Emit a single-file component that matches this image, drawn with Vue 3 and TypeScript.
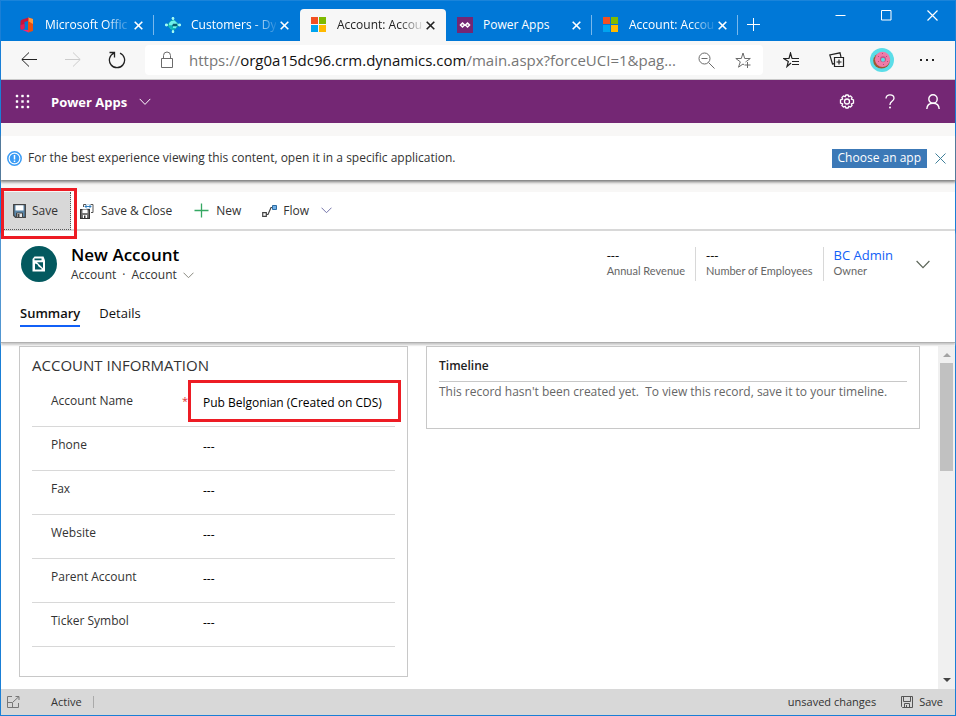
<script setup lang="ts">
import { ref } from 'vue'

interface BrowserTab {
  id: number
  title: string
  icon: 'office' | 'customers' | 'microsoft' | 'powerapps'
  divider: boolean
  faded: boolean
}

interface Field {
  id: string
  label: string
  value: string
  required?: boolean
}

const tabs: BrowserTab[] = [
  { id: 1, title: 'Microsoft Offic', icon: 'office', divider: true, faded: true },
  { id: 2, title: 'Customers - Dy', icon: 'customers', divider: false, faded: true },
  { id: 3, title: 'Account: Accou', icon: 'microsoft', divider: false, faded: true },
  { id: 4, title: 'Power Apps', icon: 'powerapps', divider: true, faded: false },
  { id: 5, title: 'Account: Accou', icon: 'microsoft', divider: true, faded: true },
]
const activeTab = ref(3)

const fields = ref<Field[]>([
  { id: 'account-name', label: 'Account Name', value: 'Pub Belgonian (Created on CDS)', required: true },
  { id: 'phone', label: 'Phone', value: '---' },
  { id: 'fax', label: 'Fax', value: '---' },
  { id: 'website', label: 'Website', value: '---' },
  { id: 'parent-account', label: 'Parent Account', value: '---' },
  { id: 'ticker-symbol', label: 'Ticker Symbol', value: '---' },
])
</script>

<template>
  <div class="window">
    <header class="titlebar">
      <div class="tabs" role="tablist">
        <div v-for="tab in tabs" :key="tab.id" class="tab" :class="{ active: tab.id === activeTab, divider: tab.divider }">
          <button class="tab-main" type="button" role="tab" :aria-selected="tab.id === activeTab" @click="activeTab = tab.id">
            <svg v-if="tab.icon === 'office'" class="favicon" viewBox="0 0 16 16" aria-hidden="true">
              <path d="M9 .5 14 2v12l-5 1.500z" fill="#e8500f" />
              <path d="M9 .5 14 2v5L9 4z" fill="#ff9a3c" />
              <path d="M9.500 .5 3.500 2.500C2 3 1.500 4 1.500 5v6c0 1.300.6 2 1.800 1.500L5.500 11.500V5l4-1.300z" fill="#c8143c" />
              <path d="M3 12.700 9.500 13v2.500z" fill="#f0287d" />
              <path d="M1.500 8v3c0 1.300.6 2 1.800 1.500l2.200-1V7z" fill="#e51b58" />
            </svg>
            <svg v-else-if="tab.icon === 'customers'" class="favicon" viewBox="0 0 16 16" aria-hidden="true">
              <path d="M8 1.500 14.500 8 8 14.500 1.500 8z" fill="#08a4a8" />
              <path d="M8 1.500 14.500 8H8z" fill="#39c6c4" />
              <circle cx="8" cy="8" r="4.200" fill="#6ff0ea" />
              <path d="M3.800 8.200A4.200 4.200 0 0 0 11 11H8V8.200z" fill="#0fb5bb" />
              <path d="M7 9.200 8 6.800h4v2.400z" fill="#0a5c70" />
              <path d="M0 8h3M13 8h3M8 0v3M8 13v3" stroke="#8ff2ec" stroke-width="1.600" />
              <circle cx="8" cy="1.300" r="1.300" fill="#a5fbf3" /><circle cx="8" cy="14.700" r="1.300" fill="#a5fbf3" />
              <circle cx="1.400" cy="8" r="1.400" fill="#a5fbf3" /><circle cx="14.600" cy="8" r="1.400" fill="#a5fbf3" />
            </svg>
            <svg v-else-if="tab.icon === 'microsoft'" class="favicon" viewBox="0 0 16 16" aria-hidden="true">
              <path d="M0 0h7v7H0z" fill="#f25022" /><path d="M8 0h7v7H8z" fill="#7fba00" />
              <path d="M0 8h7v7H0z" fill="#00a4ef" /><path d="M8 8h7v7H8z" fill="#ffb900" />
            </svg>
            <svg v-else class="favicon" viewBox="0 0 16 16" aria-hidden="true">
              <path d="M0 0h16v16H0z" fill="#742774" />
              <path d="M5.500 6 7.500 8 5.500 10 3.500 8zM10.500 6 12.500 8 10.500 10 8.500 8z" fill="none" stroke="#fff" stroke-width="1.500" />
            </svg>
            <span class="tab-title" :class="{ faded: tab.faded }">{{ tab.title }}</span>
          </button>
          <button class="tab-close" type="button" aria-label="Close tab">
            <svg width="9" height="9" viewBox="0 0 9 9"><path d="M.7.7l7.600 7.600M8.300.7.7 8.300" stroke="currentColor" stroke-width="1.600" /></svg>
          </button>
        </div>
        <button class="new-tab" type="button" aria-label="New tab">
          <svg width="14" height="14" viewBox="0 0 14 14"><path d="M6.500 0v13M0 6.500h13" stroke="currentColor" /></svg>
        </button>
      </div>
      <div class="window-controls">
        <button type="button" aria-label="Minimize"><svg width="11" height="11" viewBox="0 0 11 11"><path d="M.5 5.500H10.500" stroke="currentColor" /></svg></button>
        <button type="button" aria-label="Maximize"><svg width="11" height="11" viewBox="0 0 11 11"><path d="M.5.5h9.500v9.500H.5z" fill="none" stroke="currentColor" /></svg></button>
        <button type="button" aria-label="Close"><svg width="11" height="11" viewBox="0 0 11 11"><path d="M.5.5l10 10M10.500.5l-10 10" stroke="currentColor" stroke-width="1.200" /></svg></button>
      </div>
    </header>

    <nav class="toolbar" aria-label="Browser">
      <div class="nav-buttons">
        <button type="button" aria-label="Back"><svg width="16" height="16" viewBox="0 0 16 16"><path d="M16 7.500H1M8 .5.8 7.500 8 14.500" class="line" /></svg></button>
        <button type="button" aria-label="Forward" disabled><svg width="16" height="16" viewBox="0 0 16 16"><path d="M0 7.500h15M8 .5l7.200 7L8 14.500" class="line" /></svg></button>
        <button type="button" aria-label="Refresh"><svg width="18" height="18" viewBox="0 0 18 18"><path d="M6 2.100A7.600 7.600 0 1 0 12 2.100M1.500 1.500H6.500V6.500" class="line" stroke-width="1.300" /></svg></button>
      </div>
      <div class="address">
        <svg width="14" height="18" viewBox="0 0 14 18" aria-hidden="true"><path d="M1.500 7.500h11v9h-11zM3.500 7.500V4.500a3.500 3.500 0 0 1 7 0v3" fill="none" stroke="#6b6b6b" /></svg>
        <div class="url" role="textbox" aria-label="Address">https://<b>org0a15dc96.crm.dynamics.com</b>/main.aspx?forceUCI=1&amp;pag...</div>
        <button type="button" aria-label="Zoom out"><svg width="17" height="17" viewBox="0 0 17 17"><circle cx="6.500" cy="6.500" r="5.500" class="line" /><path d="M3.500 6.500h6M10.500 10.500l6 6" class="line" /></svg></button>
        <button type="button" aria-label="Add to favorites"><svg width="17" height="17" viewBox="0 0 17 17"><path d="M10.500 10 11.500 9.300 15.300 6.500H9.700L8 1 6.300 6.500H.8L5.300 9.800 3.500 15.200 8 12 9 12.700M12.500 10v6M9.500 13h6" class="line" /></svg></button>
      </div>
      <div class="browser-actions">
        <button type="button" aria-label="Favorites"><svg width="17" height="16" viewBox="0 0 17 16"><path d="M8 11 4 14.500 5.300 9.500.8 6.500H6L7.500 1 9 6.500M9 6.500h7M9 9.500h7M9 12.500h7" class="line" stroke-width="1.200" /></svg></button>
        <button type="button" aria-label="Collections"><svg width="16" height="16" viewBox="0 0 16 16"><path d="M5.500 5.500h9v9h-9zM10 7.500v5M7.500 10h5M12 5 11 .8.8 3 3.500 12l1.500-.4" class="line" stroke-width="1.200" /></svg></button>
        <button type="button" aria-label="Profile">
          <svg width="24" height="24" viewBox="0 0 24 24">
            <circle cx="12" cy="12" r="12" fill="#5bdde8" /><ellipse cx="11.500" cy="12.800" rx="8.300" ry="7.800" fill="#9b5a31" />
            <circle cx="12.500" cy="11.300" r="7.600" fill="#f07ba8" /><circle cx="13" cy="11.300" r="3" fill="#c75283" /><circle cx="13" cy="11.700" r="2" fill="#5bdde8" />
            <path d="M8 8l1 1M12 5.500h1M17 8l-1 1M8 14l1-1M13 16.500h1M17 14l1-1" stroke="#bd4779" />
          </svg>
        </button>
        <button type="button" aria-label="More"><svg width="16" height="4" viewBox="0 0 16 4"><path d="M1 1h2v2H1zM7 1h2v2H7zM13 1h2v2h-2z" fill="#222" /></svg></button>
      </div>
    </nav>

    <header class="appbar">
      <button type="button" class="waffle" aria-label="App launcher">
        <svg width="15" height="15" viewBox="0 0 15 15"><path d="M1 1h2v2H1zM6.500 1h2v2h-2zM12 1h2v2h-2zM1 6.500h2v2H1zM6.500 6.500h2v2h-2zM12 6.500h2v2h-2zM1 12h2v2H1zM6.500 12h2v2h-2zM12 12h2v2h-2z" fill="currentColor" stroke="currentColor" stroke-width=".4" /></svg>
      </button>
      <button type="button" class="app-name">Power Apps
        <svg width="12" height="8" viewBox="0 0 12 8"><path d="M.7.9 6 6.400 11.300.9" class="line" /></svg>
      </button>
      <div class="app-actions">
        <button type="button" aria-label="Settings"><svg width="16" height="16" viewBox="0 0 16 16"><path d="M6.200 2.600 7 1h2l.8 1.600 1.700-.6 1.500 1.500-.6 1.700L14.500 6v3l-2.100.8.6 1.700-1.500 1.500-1.700-.6L9 14H7l-.8-1.600-1.700.6L3 11.500l.6-1.700L1.500 9V6l2.100-.8L3 3.500 4.500 2z" class="line" stroke-width="1.300" /><circle cx="8" cy="7.500" r="2.500" class="line" stroke-width="1.300" /></svg></button>
        <button type="button" aria-label="Help"><svg width="10" height="15" viewBox="0 0 10 15"><path d="M1 4.500C1 2.200 2.700.8 5 .8s4 1.300 4 3.400c0 3-4 3.200-4 6.300v.5" class="line" stroke-width="1.300" /><circle cx="5" cy="13.500" r="1" fill="currentColor" /></svg></button>
        <button type="button" aria-label="Account"><svg width="14" height="16" viewBox="0 0 14 16"><circle cx="7" cy="5" r="4.200" class="line" stroke-width="1.400" /><path d="M.8 15C1 11.500 3.500 9.200 7 9.200s6 2.300 6.200 5.800" class="line" stroke-width="1.400" /></svg></button>
      </div>
    </header>

    <section class="notice">
      <svg width="15" height="15" viewBox="0 0 15 15" aria-hidden="true"><circle cx="7.500" cy="7.500" r="6.700" fill="#fff" stroke="#3b9cf5" stroke-width="1.500" /><circle cx="7.500" cy="7.500" r="4.800" fill="#3b9cf5" /><path d="M7.500 4v4.500M7.500 9.500V11" stroke="#fff" stroke-width="1.500" /></svg>
      <p>For the best experience viewing this content, open it in a specific application.</p>
      <button type="button" class="choose">Choose an app</button>
      <button type="button" class="dismiss" aria-label="Dismiss"><svg width="11" height="11" viewBox="0 0 11 11"><path d="M.5.5l10 10M10.500.5l-10 10" stroke="#40809a" /></svg></button>
    </section>

    <section class="commands" aria-label="Commands">
      <div class="save-wrap">
        <button type="button" class="command save">
          <svg width="13" height="14" viewBox="0 0 13 14"><path d="M.7.7h11.600v12.600H2.500L.7 11.500z" fill="#5a88ab" stroke="#444" stroke-width="1.300" /><path d="M2.500 1.300h8v5.200h-8z" fill="#fff" /><path d="M3.500 9h6v4.500h-6z" fill="#e8e8e8" stroke="#444" /><path d="M4.500 10h2v3h-2z" fill="#444" /></svg>
          Save
        </button>
        <span class="highlight"></span>
      </div>
      <button type="button" class="command save-close">
        <svg width="14" height="16" viewBox="0 0 14 16"><path d="M.6 6.600h8.800v8.800H.6z" fill="#777" stroke="#333" stroke-width="1.200" /><path d="M2.500 6.500h5V10h-5zM3 12h4v3H3z" fill="#fff" /><path d="M4 12.500h1.500V15H4z" fill="#333" /><path d="M3.500 4V1.500H6M10.500 1.500H13v8h-2" fill="none" stroke="#555" /><path d="M5 3.500h6M9 1.500l2 2-2 2M7 1.500 5 3.500l2 2" fill="none" stroke="#2f7cbc" /></svg>
        Save &amp; Close
      </button>
      <button type="button" class="command new">
        <svg width="15" height="15" viewBox="0 0 15 15"><path d="M7.500.5v14M.5 7.500h14" stroke="#35a863" stroke-width="1.300" /></svg>
        New
      </button>
      <button type="button" class="command flow">
        <svg width="15" height="12" viewBox="0 0 15 12"><path d="M.7 7.700h3.600v3.600H.7zM4.500 9.500H6L9 2.500h1.500" fill="none" stroke="#444" stroke-width="1.200" /><path d="M10.500.5h4v4h-4z" fill="#71afe5" stroke="#2b6ca3" /></svg>
        Flow
        <svg class="flow-chevron" width="11" height="7" viewBox="0 0 11 7"><path d="M.5.7l5 5 5-5" fill="none" stroke="#7474aa" /></svg>
      </button>
    </section>

    <section class="record">
      <div class="record-top">
        <svg class="entity" width="36" height="36" viewBox="0 0 36 36" aria-hidden="true"><circle cx="18" cy="18" r="18" fill="#03595f" /><path d="M13.500 10.500h9l1.500 4v11H11.500V13z" fill="#fff" /><path d="M13.500 12.500h7v1.800h-7zM14 17.500l2.500 1 1 2 3 2v1H14z" fill="#03595f" /><path d="M16 16.300h6v6z" fill="#03595f" /></svg>
        <div class="identity">
          <h1>New Account</h1>
          <button type="button">Account<span>·</span>Account<svg width="11" height="7" viewBox="0 0 11 7"><path d="M.5.7l5 5 5-5" fill="none" stroke="#8a8a80" /></svg></button>
        </div>
        <dl class="stats">
          <div><dd>---</dd><dt>Annual Revenue</dt></div>
          <div><dd>---</dd><dt>Number of Employees</dt></div>
          <div><dd><a href="#owner">BC Admin</a></dd><dt>Owner</dt></div>
        </dl>
        <button type="button" class="expand" aria-label="Expand header"><svg width="14" height="9" viewBox="0 0 14 9"><path d="M.6 1 7 7.600 13.400 1" fill="none" stroke="#5d6659" stroke-width="1.200" /></svg></button>
      </div>
      <div class="form-tabs" role="tablist">
        <button type="button" role="tab" aria-selected="true" class="selected">Summary</button>
        <button type="button" role="tab" aria-selected="false">Details</button>
      </div>
    </section>

    <main class="body">
      <div class="columns">
        <section class="card">
          <h2>ACCOUNT INFORMATION</h2>
          <div v-for="field in fields" :key="field.id" class="field">
            <label :for="field.id">{{ field.label }}</label>
            <span class="star">{{ field.required ? '*' : '' }}</span>
            <div class="control">
              <input :id="field.id" v-model="field.value" type="text" />
              <span v-if="field.required" class="highlight"></span>
            </div>
          </div>
        </section>
        <section class="card timeline">
          <h3>Timeline</h3>
          <p>This record hasn't been created yet.&nbsp; To view this record, save it to your timeline.</p>
        </section>
      </div>
      <div class="scrollbar" aria-hidden="true">
        <svg width="8" height="4" viewBox="0 0 8 4"><path d="M0 4 4 0l4 4z" fill="#a3a3a3" /></svg>
        <div class="track"><div class="thumb"></div></div>
        <svg width="8" height="4" viewBox="0 0 8 4"><path d="M0 0l4 4 4-4z" fill="#444" /></svg>
      </div>
    </main>

    <footer class="status">
      <button type="button" class="popout" aria-label="Open in new window"><svg width="13" height="12" viewBox="0 0 13 12"><path d="M5 .5H.5v11h11V7M.5 6.500h5v5M6 6l6-5.500M8.500.5H12V4" fill="none" stroke="#777" /></svg></button>
      <span class="state">Active</span>
      <span class="unsaved">unsaved changes</span>
      <button type="button" class="footer-save"><svg width="12" height="12" viewBox="0 0 12 12"><path d="M.5.5h11v11h-10L.5 10.500zM2.500.5v5h7v-5M3.500 11.500v-4h5v4M5.500 9v2.500" fill="none" stroke="#555" /></svg>Save</button>
    </footer>
  </div>
</template>

<style>
body {
  margin: 0;
}
</style>

<style scoped>
.window {
  --red: #ed1c24;
  box-sizing: border-box;
  display: flex;
  flex-direction: column;
  min-height: 100vh;
  border: 1px solid #1a7fd6;
  border-top: 0;
  background: #fff;
  color: #333;
  font: 12px/16px "Open Sans", "Noto Sans", sans-serif;
}
.window * {
  box-sizing: border-box;
}
button {
  display: inline-flex;
  align-items: center;
  justify-content: center;
  padding: 0;
  border: 0;
  background: none;
  color: inherit;
  font: inherit;
  white-space: nowrap;
}
svg {
  flex: none;
}
.line {
  fill: none;
  stroke: currentColor;
}
h1, h2, h3, p, dl, dd, dt {
  margin: 0;
  font-weight: 400;
}

.titlebar {
  display: flex;
  justify-content: space-between;
  height: 41px;
  border-top: 1px solid #1a84da;
  background: #0078d7;
  color: #fff;
}
.tabs {
  display: flex;
  padding: 8px 0 0 7px;
}
.tab {
  position: relative;
  display: flex;
  align-items: center;
  width: 146px;
  padding: 0 11px;
  border-radius: 4px 4px 0 0;
}
.tab.divider::after {
  content: "";
  position: absolute;
  right: 0;
  top: 6px;
  width: 1px;
  height: 20px;
  background: #79b8ec;
}
.tab.active {
  background: #f7f7f7;
  color: #222;
}
.tab-main {
  flex: 1;
  min-width: 0;
  justify-content: flex-start;
  gap: 10px;
}
.favicon {
  width: 16px;
  height: 16px;
}
.tab-title {
  flex: 1;
  text-align: left;
}
.tab-title.faded {
  mask-image: linear-gradient(to right, #000 72%, transparent 104%);
}
.tab-close {
  width: 14px;
  height: 18px;
  justify-content: flex-end;
}
.new-tab {
  width: 32px;
}
.window-controls {
  display: flex;
  height: 29px;
}
.window-controls button {
  width: 46px;
}

.toolbar {
  display: flex;
  align-items: center;
  height: 39px;
  border-bottom: 1px solid #c9c9c9;
  background: #f7f7f7;
  color: #222;
}
.nav-buttons {
  display: flex;
  gap: 4px;
  width: 144px;
  padding-left: 8px;
}
.nav-buttons button {
  width: 40px;
  height: 30px;
}
.nav-buttons button:disabled {
  color: #ccc;
}
.address {
  display: flex;
  flex: 1;
  align-items: center;
  min-width: 0;
  height: 30px;
  padding: 0 11px 0 15px;
  border-radius: 4px;
  background: #fff;
  color: #6b6b6b;
}
.url {
  flex: 1;
  min-width: 0;
  margin-left: 15px;
  overflow: hidden;
  color: #767676;
  font-size: 15px;
  line-height: 24px;
  white-space: nowrap;
}
.url b {
  color: #111;
  font-weight: 400;
}
.address button {
  width: 17px;
  margin-left: 20px;
}
.address .url + button {
  margin-left: 4px;
}
.browser-actions {
  display: flex;
  padding: 0 6px;
}
.browser-actions button {
  width: 45px;
  height: 30px;
}

.appbar {
  display: flex;
  align-items: center;
  height: 43px;
  background: #742774;
  color: #fff;
}
.waffle {
  width: 42px;
  height: 100%;
}
.app-name {
  gap: 12px;
  margin-left: 8px;
  font-size: 13px;
  font-weight: 700;
}
.app-actions {
  display: flex;
  margin-left: auto;
  padding-right: 1px;
}
.app-actions button {
  width: 43px;
  height: 43px;
}

.notice {
  position: relative;
  display: flex;
  align-items: center;
  height: 44px;
  margin-top: 13px;
  padding: 0 8px 0 6px;
  background: #fff;
  box-shadow: 0 -13px 0 #f8f7f6, 0 1px 3px 1px #777;
}
.notice p {
  flex: 1;
  margin-left: 6px;
}
.choose {
  height: 19px;
  padding: 0 6px;
  background: #3c79b7;
  color: #fff;
}
.dismiss {
  width: 13px;
  height: 20px;
  margin-left: 7px;
}

.commands {
  display: flex;
  height: 51px;
  padding: 0 3px;
  border-top: 12px solid #f8f7f6;
  border-bottom: 2px solid #d8d8d8;
}
.save-wrap {
  position: relative;
}
.command {
  height: 37px;
}
.save {
  justify-content: flex-start;
  gap: 6px;
  width: 67px;
  height: 38px;
  padding-left: 9px;
  border: 1px dotted #555;
  border-width: 0 1px 1px 0;
  background: #d8d8d8;
}
.highlight {
  position: absolute;
  border: 3px solid var(--red);
  pointer-events: none;
}
.save-wrap .highlight {
  z-index: 2;
  inset: -4px -6px -10px -3px;
}
.save-close {
  gap: 7px;
  margin-left: 9px;
}
.new {
  gap: 7px;
  margin-left: 22px;
}
.flow {
  gap: 6px;
  margin-left: 21px;
}
.flow-chevron {
  margin-left: 6px;
}

.record {
  position: relative;
  z-index: 1;
  padding: 13px 12px 15px 20px;
  border-bottom: 1px solid #b0b0b0;
  box-shadow: 0 2px 2px #c8c8c8;
}
.record-top {
  display: flex;
  align-items: center;
}
.identity {
  margin-left: 14px;
}
h1 {
  color: #000;
  font-size: 17px;
  font-weight: 600;
  line-height: 22px;
}
.identity button {
  display: flex;
  line-height: 18px;
}
.identity span {
  margin: 0 6px;
}
.identity svg {
  margin-left: 6px;
}
.stats {
  display: flex;
  margin-left: auto;
}
.stats div {
  display: flex;
  flex-direction: column-reverse;
  justify-content: flex-end;
  height: 34px;
  padding: 0 10px;
  border-right: 1px solid #d8d8d8;
}
.stats div:last-child {
  border: 0;
}
.stats dd {
  order: 1;
  color: #111;
  font-size: 13px;
}
.stats dt {
  color: #666;
  font-family: Lato, "Open Sans", sans-serif;
  font-size: 11px;
}
.stats a {
  color: #1160f7;
  text-decoration: none;
}
.expand {
  width: 40px;
  height: 34px;
}
.form-tabs {
  display: flex;
  gap: 19px;
  margin: 16px 0 0 -1px;
}
.form-tabs button {
  height: 27px;
  border-bottom: 2px solid transparent;
  color: #111;
  font-size: 13px;
}
.form-tabs .selected {
  border-color: #1160f7;
  font-weight: 600;
}

.body {
  display: flex;
  flex: 1;
  padding-top: 3px;
}
.columns {
  display: grid;
  flex: 1;
  grid-template-columns: 389fr 494fr;
  align-items: start;
  gap: 18px;
  padding: 0 18px 12px;
}
.card {
  min-width: 0;
  padding: 8px 12px 29px;
  border: 1px solid #c8c8c8;
}
h2 {
  height: 28px;
  font-size: 15px;
  line-height: 20px;
}
.field {
  display: grid;
  grid-template-columns: 150px 9px 1fr;
  height: 44px;
  border-bottom: 1px solid #d8d8d8;
}
.field label {
  padding: 10px 0 0 19px;
}
.star {
  padding-top: 10px;
  color: #e03030;
  font-size: 11px;
}
.control {
  position: relative;
}
.control input {
  width: 100%;
  height: 38px;
  padding: 0 0 0 12px;
  border: 0;
  outline: 0;
  background: transparent;
  color: #000;
  font: 500 12px/16px "Open Sans", "Noto Sans", sans-serif;
}
.control .highlight {
  inset: -3px -6px 4px -3px;
}
.timeline {
  padding: 8px 12px 28px;
}
h3 {
  padding: 3px 0 7px;
  border-bottom: 1px solid #c8c8c8;
  color: #222;
  font-size: 12px;
  font-weight: 600;
}
.timeline p {
  padding-top: 2px;
  color: #666;
}
.scrollbar {
  display: flex;
  flex-direction: column;
  align-items: center;
  width: 17px;
  padding: 7px 0;
  background: #f0f0f0;
}
.track {
  flex: 1;
  width: 13px;
  padding: 6px 0;
}
.thumb {
  height: 108px;
  background: #c1c1c1;
}

.status {
  display: flex;
  align-items: center;
  height: 26px;
  padding: 0 12px 0 6px;
  background: #d8d8d8;
  font-size: 11px;
}
.state {
  margin-left: 31px;
  padding-right: 11px;
  border-right: 1px solid #aaa;
  line-height: 12px;
}
.unsaved {
  margin-left: auto;
}
.footer-save {
  gap: 6px;
  margin-left: 25px;
}
</style>
